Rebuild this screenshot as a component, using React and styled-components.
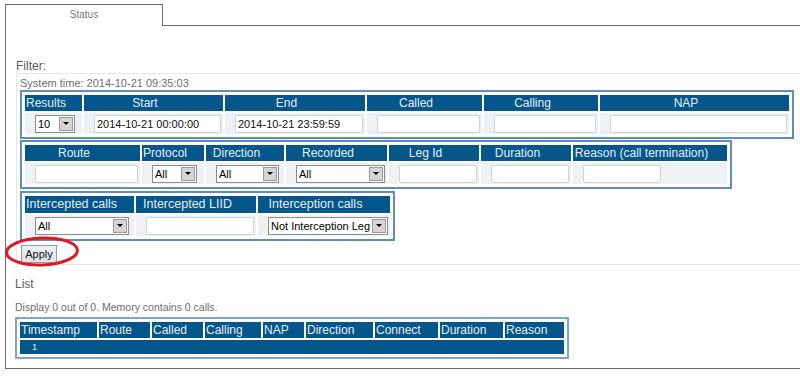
import React from "react";
import styled, { createGlobalStyle } from "styled-components";

const Global = createGlobalStyle`
  html, body { margin: 0; padding: 0; background: #fff; overflow: hidden; }
  body { font-family: "Liberation Sans", Arial, sans-serif; }
`;

const Page = styled.div`
  padding: 4px 0 0 5px;
  width: 795px;
`;

const TabBar = styled.div`
  display: flex;
  height: 22px;
`;

const Tab = styled.div`
  box-sizing: border-box;
  width: 158px;
  height: 22px;
  border: 1px solid #6b6b6b;
  border-bottom: none;
  text-align: center;
  font-size: 10px;
  line-height: 19px;
  color: #7a7a7a;
`;

const TabFill = styled.div`
  flex: 1;
  box-sizing: border-box;
  height: 22px;
  border-bottom: 1px solid #6b6b6b;
`;

const Panel = styled.div`
  border-left: 1px solid #6b6b6b;
  border-bottom: 1px solid #6b6b6b;
  padding: 33px 0 9px 9px;
`;

const SectionLabel = styled.div`
  font-size: 12px;
  line-height: 14px;
  color: #5c5c5c;
  margin-left: ${(p) => p.$ml || 0}px;
  margin-top: ${(p) => p.$mt || 0}px;
`;

const Fieldset = styled.div`
  margin-left: 1px;
  border: 1px solid #e2e7eb;
  border-right: none;
  padding: 3px 0 0 3px;
`;

const SmallText = styled.div`
  font-size: ${(p) => p.$fs}px;
  line-height: ${(p) => p.$lh}px;
  color: #6e6e6e;
  margin-top: ${(p) => p.$mt || 0}px;
`;

const FilterTable = styled.div`
  display: grid;
  width: max-content;
  grid-template-columns: ${(p) => p.$cols};
  grid-template-rows: ${(p) => p.$headH}px 21px;
  gap: 2px;
  padding: 3px;
  border: 2px solid #5f8ebc;
  background: #fff;
  margin-top: ${(p) => p.$mt || 0}px;
`;

const HeadCell = styled.div`
  background: #04568b;
  color: #e6edf4;
  font-size: ${(p) => p.$fs || 12}px;
  line-height: ${(p) => p.$h}px;
  text-align: center;
  padding: 0 18px 0 1px;
  white-space: nowrap;
`;

const DataCell = styled.div`
  background: #eef1f4;
  display: flex;
  align-items: center;
  padding: 0 2px 0 10px;
`;

const TextInput = styled.input`
  box-sizing: border-box;
  height: 18px;
  width: ${(p) => (p.$w ? `${p.$w}px` : "100%")};
  border: 1px solid #cdd4da;
  border-radius: 2px;
  background: #fff;
  padding: 0 2px;
  font-family: "Liberation Sans", Arial, sans-serif;
  font-size: 11px;
  color: #111;
  outline: none;
`;

const SelectBox = styled.div`
  box-sizing: border-box;
  width: ${(p) => p.$w}px;
  height: 18px;
  border: 1px solid #8e8e8e;
  background: #fff;
  display: flex;
  align-items: center;
  justify-content: space-between;
  padding-left: 2px;
  font-size: 11px;
  color: #000;
  white-space: nowrap;
  overflow: hidden;
`;

const Arrow = styled.span`
  flex: none;
  box-sizing: border-box;
  width: 14px;
  height: 14px;
  margin-right: 1px;
  background: #d5d5d5;
  border: 1px solid #9a9a9a;
  display: flex;
  align-items: center;
  justify-content: center;
  &::after {
    content: "";
    border-left: 3px solid transparent;
    border-right: 3px solid transparent;
    border-top: 3px solid #000;
  }
`;

const ButtonRow = styled.div`
  position: relative;
  margin: 4px 0 1px 1px;
  width: max-content;
`;

const Button = styled.div`
  box-sizing: border-box;
  width: 36px;
  height: 18px;
  border: 1px solid #8c9cae;
  background: linear-gradient(#eef0f2, #dfe2e5);
  font-size: 11px;
  line-height: 16px;
  text-align: center;
  color: #111;
`;

const Circle = styled.svg`
  position: absolute;
  left: -17px;
  top: -9px;
  overflow: visible;
  pointer-events: none;
`;

const ListTable = styled.div`
  display: grid;
  width: max-content;
  grid-template-columns: 77px 51px 51px 56px 41px 67px 63px 63px 59px;
  grid-template-rows: 16px 14px;
  gap: 2px;
  padding: 3px;
  border: 2px solid #7ea6ca;
  margin-top: 4px;
`;

const ListHead = styled.div`
  background: #04568b;
  color: #e6edf4;
  font-size: 12px;
  line-height: 16px;
  padding-left: 1px;
  white-space: nowrap;
  overflow: hidden;
`;

const ListBody = styled.div`
  grid-column: 1 / -1;
  background: #04568b;
  color: #e6edf4;
  font-size: 9px;
  line-height: 14px;
  padding-left: 12px;
`;

const Select = ({ w, value }) => (
  <SelectBox $w={w}>
    <span>{value}</span>
    <Arrow />
  </SelectBox>
);

export default function App() {
  return (
    <>
      <Global />
      <Page>
        <TabBar>
          <Tab>Status</Tab>
          <TabFill />
        </TabBar>
        <Panel>
          <SectionLabel $ml={1}>Filter:</SectionLabel>
          <Fieldset>
            <SmallText $fs={11} $lh={13}>System time: 2014-10-21 09:35:03</SmallText>

            <FilterTable $cols="57px 139px 140px 115px 114px 189px" $headH={16}>
              <HeadCell $h={16}>Results</HeadCell>
              <HeadCell $h={16}>Start</HeadCell>
              <HeadCell $h={16}>End</HeadCell>
              <HeadCell $h={16}>Called</HeadCell>
              <HeadCell $h={16}>Calling</HeadCell>
              <HeadCell $h={16}>NAP</HeadCell>
              <DataCell>
                <Select w={40} value="10" />
              </DataCell>
              <DataCell>
                <TextInput readOnly value="2014-10-21 00:00:00" />
              </DataCell>
              <DataCell>
                <TextInput readOnly value="2014-10-21 23:59:59" />
              </DataCell>
              <DataCell>
                <TextInput readOnly value="" />
              </DataCell>
              <DataCell>
                <TextInput readOnly value="" />
              </DataCell>
              <DataCell>
                <TextInput readOnly value="" />
              </DataCell>
            </FilterTable>

            <FilterTable $cols="115px 62px 78px 101px 90px 90px 154px" $headH={16} $mt={1}>
              <HeadCell $h={16}>Route</HeadCell>
              <HeadCell $h={16}>Protocol</HeadCell>
              <HeadCell $h={16}>Direction</HeadCell>
              <HeadCell $h={16}>Recorded</HeadCell>
              <HeadCell $h={16}>Leg Id</HeadCell>
              <HeadCell $h={16}>Duration</HeadCell>
              <HeadCell $h={16}>Reason (call termination)</HeadCell>
              <DataCell>
                <TextInput readOnly value="" />
              </DataCell>
              <DataCell>
                <Select w={45} value="All" />
              </DataCell>
              <DataCell>
                <Select w={63} value="All" />
              </DataCell>
              <DataCell>
                <Select w={89} value="All" />
              </DataCell>
              <DataCell>
                <TextInput readOnly value="" />
              </DataCell>
              <DataCell>
                <TextInput readOnly value="" />
              </DataCell>
              <DataCell>
                <TextInput readOnly value="" $w={78} />
              </DataCell>
            </FilterTable>

            <FilterTable $cols="109px 120px 132px" $headH={17} $mt={2}>
              <HeadCell $h={17} $fs={12.5}>Intercepted calls</HeadCell>
              <HeadCell $h={17} $fs={12.5}>Intercepted LIID</HeadCell>
              <HeadCell $h={17} $fs={12.5}>Interception calls</HeadCell>
              <DataCell>
                <Select w={94} value="All" />
              </DataCell>
              <DataCell>
                <TextInput readOnly value="" />
              </DataCell>
              <DataCell>
                <Select w={120} value="Not Interception Leg" />
              </DataCell>
            </FilterTable>

            <ButtonRow>
              <Button>Apply</Button>
              <Circle width="78" height="32" viewBox="0 0 78 32">
                <ellipse
                  cx="38"
                  cy="15.5"
                  rx="35.5"
                  ry="13.5"
                  fill="none"
                  stroke="#e3171e"
                  strokeWidth="3"
                  transform="rotate(-2 38 15.5)"
                />
              </Circle>
            </ButtonRow>
          </Fieldset>

          <SectionLabel $mt={12}>List</SectionLabel>
          <SmallText $fs={10.5} $lh={12} $mt={10}>
            Display 0 out of 0. Memory contains 0 calls.
          </SmallText>
          <ListTable>
            <ListHead>Timestamp</ListHead>
            <ListHead>Route</ListHead>
            <ListHead>Called</ListHead>
            <ListHead>Calling</ListHead>
            <ListHead>NAP</ListHead>
            <ListHead>Direction</ListHead>
            <ListHead>Connect</ListHead>
            <ListHead>Duration</ListHead>
            <ListHead>Reason</ListHead>
            <ListBody>1</ListBody>
          </ListTable>
        </Panel>
      </Page>
    </>
  );
}
